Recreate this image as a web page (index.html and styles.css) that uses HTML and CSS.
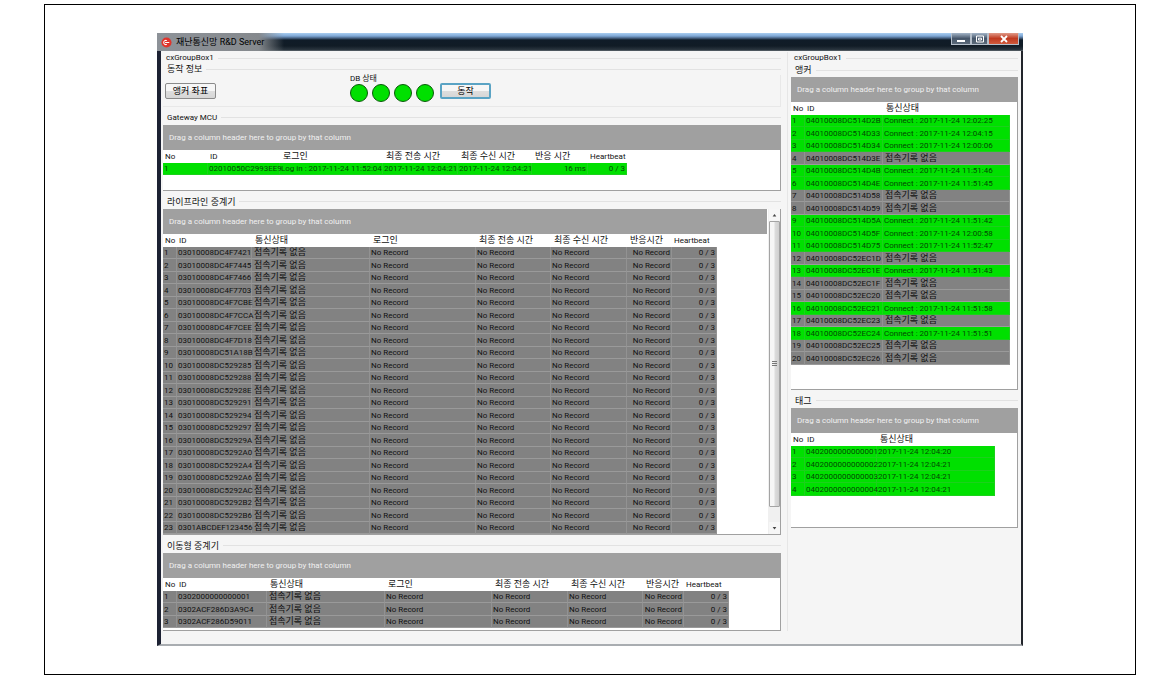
FILE: index.html
```html
<!DOCTYPE html>
<html lang="ko">
<head>
<meta charset="utf-8">
<title>재난통신망 R&amp;D Server</title>
<link rel="stylesheet" href="styles.css">
</head>
<body>
<div class="frame">
  <div class="window">
    <header class="titlebar">
      <div class="title">
        <svg class="logo" viewBox="0 0 12 12" aria-hidden="true"><circle cx="6" cy="6" r="5.5" fill="#e0342c"/><path d="M6.4 4A2.3 2.3 0 1 0 6.4 8M4.4 6H9" fill="none" stroke="#fff" stroke-width="1.1"/></svg>
        <h1>재난통신망 R&amp;D Server</h1>
      </div>
      <div class="controls">
        <button class="ctl ctl-min" aria-label="최소화"><svg viewBox="0 0 12 10"><path d="M2 6h8v2H2z" fill="#fff"/></svg></button>
        <button class="ctl ctl-max" aria-label="최대화"><svg viewBox="0 0 12 10"><path d="M2.5 2h7v6h-7zM4.5 4.2h3v1.8h-3z" fill="none" stroke="#fff"/></svg></button>
        <button class="ctl ctl-close" aria-label="닫기"><svg viewBox="0 0 12 10"><path d="M3 2l6 6M9 2L3 8" stroke="#fff" stroke-width="1.8"/></svg></button>
      </div>
    </header>
    <main class="content">
      <div class="column">
        <h2 class="caption caption-group">cxGroupBox1</h2>
        <h3 class="caption caption-inner ko">동작 정보</h3>
        <div class="toolbar">
          <button class="btn">앵커 좌표</button>
          <div class="db">
            <span class="db-label">DB 상태</span>
            <div class="lamps"><i class="lamp"></i><i class="lamp"></i><i class="lamp"></i><i class="lamp"></i></div>
          </div>
          <button class="btn btn-focus">동작</button>
        </div>

        <h3 class="caption">Gateway MCU</h3>
        <section class="grid grid-gateway">
          <p class="groupby">Drag a column header here to group by that column</p>
          <table>
            <colgroup><col class="w45"><col class="w72"><col class="w103"><col class="w75"><col class="w74"><col class="w56"><col class="w39"></colgroup>
            <thead><tr><th>No</th><th>ID</th><th class="ko">로그인</th><th class="ko">최종 전송 시간</th><th class="ko">최종 수신 시간</th><th class="ko">반응 시간</th><th>Heartbeat</th></tr></thead>
            <tbody id="gateway"></tbody>
          </table>
        </section>

        <h3 class="caption ko">라이프라인 중계기</h3>
        <section class="grid grid-scroll">
          <div class="grid-main">
            <p class="groupby">Drag a column header here to group by that column</p>
            <table>
              <colgroup><col class="w14"><col class="w75"><col class="w118"><col class="w106"><col class="w75"><col class="w76"><col class="w45"><col class="w45"></colgroup>
              <thead><tr><th>No</th><th>ID</th><th class="ko">통신상태</th><th class="ko">로그인</th><th class="ko">최종 전송 시간</th><th class="ko">최종 수신 시간</th><th class="ko">반응시간</th><th>Heartbeat</th></tr></thead>
              <tbody id="lifeline"></tbody>
            </table>
          </div>
          <div class="scrollbar" aria-hidden="true">
            <svg class="arrow" viewBox="0 0 12 12"><path d="M4 7.5L6 5l2 2.5z" fill="#444"/></svg>
            <div class="thumb"><svg viewBox="0 0 6 6"><path d="M0 .5h5M0 2.5h5M0 4.5h5" stroke="#777"/></svg></div>
            <svg class="arrow arrow-down" viewBox="0 0 12 12"><path d="M4 5l2 2.5L8 5z" fill="#444"/></svg>
          </div>
        </section>

        <h3 class="caption ko">이동형 중계기</h3>
        <section class="grid grid-mobile">
          <p class="groupby">Drag a column header here to group by that column</p>
          <table>
            <colgroup><col class="w14"><col class="w90"><col class="w118"><col class="w107"><col class="w76"><col class="w75"><col class="w41"><col class="w45"></colgroup>
            <thead><tr><th>No</th><th>ID</th><th class="ko">통신상태</th><th class="ko">로그인</th><th class="ko">최종 전송 시간</th><th class="ko">최종 수신 시간</th><th class="ko">반응시간</th><th>Heartbeat</th></tr></thead>
            <tbody id="mobile"></tbody>
          </table>
        </section>
      </div>

      <div class="column column-right">
        <h2 class="caption caption-group">cxGroupBox1</h2>
        <h3 class="caption caption-anchor ko">앵커</h3>
        <section class="grid grid-anchor">
          <p class="groupby">Drag a column header here to group by that column</p>
          <table>
            <colgroup><col class="w14"><col class="w78"><col class="w127"></colgroup>
            <thead><tr><th>No</th><th>ID</th><th class="ko">통신상태</th></tr></thead>
            <tbody id="anchor"></tbody>
          </table>
        </section>

        <h3 class="caption ko">태그</h3>
        <section class="grid grid-tag">
          <p class="groupby">Drag a column header here to group by that column</p>
          <table>
            <colgroup><col class="w14"><col class="w72"><col class="w118"></colgroup>
            <thead><tr><th>No</th><th>ID</th><th class="ko">통신상태</th></tr></thead>
            <tbody id="tag"></tbody>
          </table>
        </section>
      </div>
    </main>
  </div>
</div>
<script src="grids.js"></script>
</body>
</html>
```

FILE: styles.css
```css
* { box-sizing: border-box; }

body {
  margin: 0;
  background: #fff;
  color: #111;
  font: 8px/12px Roboto, "Noto Sans CJK KR", sans-serif;
}

h1, h2, h3, p { margin: 0; font-weight: 400; }

button { font-family: inherit; padding: 0; }

.frame {
  margin: 4px 20px 6px 44px;
  padding: 28px 112px;
  border: 1px solid #000;
}

.window {
  background: #f5f5f5;
  border-left: 4px solid #1d2233;
  border-right: 2px solid #22252b;
  border-bottom: 2px solid #a9adb1;
}

.titlebar {
  display: flex;
  justify-content: space-between;
  align-items: flex-start;
  height: 18px;
  margin-left: -4px;
  margin-right: -2px;
  background: linear-gradient(#a9cdf0 0, #7fa8d6 3px, #4a6688 5px, #101c28 7px, #111c26 13px, #2c3740 17px, #6d757a 18px);
}

.title {
  display: flex;
  align-items: center;
  gap: 4px;
  height: 18px;
  padding: 0 20px 0 4px;
  background: linear-gradient(90deg, #8d9298 0, #85898d 80%, transparent);
}

.title h1 { font-size: 9px; line-height: 18px; color: #000; }

.logo { width: 11px; height: 11px; }

.controls { display: flex; padding-right: 4px; }

.ctl {
  display: flex;
  align-items: center;
  justify-content: center;
  width: 20px;
  height: 12px;
  border: 1px solid #b5bfca;
  border-top: 0;
  background: linear-gradient(#a4b5c8, #46566a 50%, #5c6a79);
}
.ctl svg { width: 12px; height: 10px; }
.ctl-max { width: 17px; }
.ctl-close { width: 31px; background: linear-gradient(#e09a88, #c03a20 50%, #d05a3c); }

.content {
  display: grid;
  grid-template-columns: 627fr 233fr;
  padding: 1px 0 13px;
}

.column { min-width: 0; padding: 0 6px 0 2px; border-right: 1px solid #e6e6e6; }
.column-right { padding: 0 3px; border-right: 0; }

.caption {
  display: flex;
  align-items: center;
  gap: 4px;
  height: 18px;
  padding: 3px 0 0 4px;
  font-size: 8px;
  line-height: 14px;
}
.caption::after { content: ""; flex: 1; border-top: 1px solid #e2e2e2; }
.caption.ko { font-size: 9px; }
.caption-group { height: 12px; padding: 0 0 0 3px; line-height: 12px; }
.caption-inner { height: 11px; padding-top: 0; line-height: 11px; }
.caption-anchor { height: 13px; padding-top: 0; line-height: 13px; }

.toolbar {
  display: flex;
  align-items: flex-end;
  height: 32px;
  padding: 0 0 4px 2px;
  border-right: 1px solid #e8e8e8;
  border-bottom: 1px solid #e8e8e8;
}

.btn {
  width: 51px;
  height: 16px;
  margin-bottom: 3px;
  border: 1px solid #8a8a8a;
  border-radius: 2px;
  background: linear-gradient(#f6f6f6 50%, #dedede 50%, #d6d6d6);
  color: #000;
  font-size: 9px;
  line-height: 12px;
}
.btn-focus { border: 2px solid #5aa3c4; margin-left: 6px; }

.db { margin-left: 134px; }
.db-label { display: block; line-height: 9px; }
.lamps { display: flex; gap: 4px; padding-top: 1px; }
.lamp {
  width: 18px;
  height: 18px;
  border: 1px solid #0a5a0a;
  border-radius: 50%;
  background: #00e000;
}

.grid {
  background: #fff;
  border-right: 1px solid #a0a0a0;
  border-bottom: 1px solid #a0a0a0;
}
.grid-gateway { min-height: 66px; }
.grid-mobile { min-height: 78px; }
.grid-anchor { min-height: 313px; }
.grid-tag { min-height: 120px; }
.grid-scroll { display: flex; }
.grid-main { flex: 1; min-width: 0; }

.groupby {
  height: 25px;
  padding-left: 6px;
  background: #a0a0a0;
  color: #f0f0f0;
  line-height: 26px;
  white-space: nowrap;
  overflow: hidden;
}

table { width: 1px; table-layout: fixed; border-collapse: separate; border-spacing: 0; }
.w14 { width: 14px; }
.w39 { width: 39px; }
.w41 { width: 41px; }
.w45 { width: 45px; }
.w56 { width: 56px; }
.w72 { width: 72px; }
.w74 { width: 74px; }
.w75 { width: 75px; }
.w76 { width: 76px; }
.w78 { width: 78px; }
.w90 { width: 90px; }
.w103 { width: 103px; }
.w106 { width: 106px; }
.w107 { width: 107px; }
.w118 { width: 118px; }
.w127 { width: 127px; }

th {
  height: 13px;
  padding: 0 0 0 2px;
  font-weight: 400;
  line-height: 13px;
  text-align: left;
  white-space: nowrap;
}

td {
  height: 12px;
  padding: 0 0 0 1px;
  background: #828282;
  border-right: 1px solid #929292;
  border-bottom: 1px solid #9a9a9a;
  line-height: 11px;
  white-space: nowrap;
}
tr:nth-child(even) td { height: 13px; }
th.ko, td.ko { font-size: 9px; }
th.ko { padding-left: 3px; }
td.ko { padding-left: 2px; }
td.num { text-align: right; padding-right: 1px; }
.on td { background: #00e000; border-color: #1cd01c; color: #034a03; }

.scrollbar {
  display: flex;
  flex-direction: column;
  width: 13px;
  padding-left: 1px;
  background: #f0f0f0;
  border-left: 1px solid #fff;
}
.arrow { width: 11px; height: 12px; background: #f6f6f6; }
.arrow-down { margin-top: auto; }
.thumb {
  display: flex;
  align-items: center;
  justify-content: center;
  flex: 0 1 88%;
  border: 1px solid #a4a4a4;
  border-radius: 1px;
  background: linear-gradient(90deg, #f6f6f6 45%, #dcdcdc 55%, #cfcfcf);
}
.thumb svg { width: 6px; height: 6px; }
```

FILE: grids.js
```js
const NONE = "접속기록 없음";
const NO = "No Record";

function fill(id, rows, numericFrom) {
  const body = document.getElementById(id);
  rows.forEach(({ cells, on }, i) => {
    const tr = body.insertRow();
    if (on) tr.className = "on";
    [i + 1, ...cells].forEach((text, c) => {
      const td = tr.insertCell();
      td.textContent = text;
      if (text === NONE) td.className = "ko";
      if (c >= numericFrom) td.className = "num";
    });
  });
}

fill("gateway", [{
  on: true,
  cells: ["02010050C2993EE9", "Log in : 2017-11-24 11:52:04", "2017-11-24 12:04:21", "2017-11-24 12:04:21", "16 ms", "0 / 3"]
}], 5);

const repeater = id => ({ cells: [id, NONE, NO, NO, NO, NO, "0 / 3"] });

fill("lifeline", [
  "03010008DC4F7421", "03010008DC4F7445", "03010008DC4F7466", "03010008DC4F7703",
  "03010008DC4F7CBE", "03010008DC4F7CCA", "03010008DC4F7CEE", "03010008DC4F7D18",
  "03010008DC51A18B", "03010008DC529285", "03010008DC529288", "03010008DC52928E",
  "03010008DC529291", "03010008DC529294", "03010008DC529297", "03010008DC52929A",
  "03010008DC5292A0", "03010008DC5292A4", "03010008DC5292A6", "03010008DC5292AC",
  "03010008DC5292B2", "03010008DC5292B6", "0301ABCDEF123456"
].map(repeater), 6);

fill("mobile", ["0302000000000001", "0302ACF286D3A9C4", "0302ACF286D59011"].map(repeater), 6);

fill("anchor", [
  ["514D2B", "12:02:25"], ["514D33", "12:04:15"], ["514D34", "12:00:06"], ["514D3E"],
  ["514D4B", "11:51:46"], ["514D4E", "11:51:45"], ["514D58"], ["514D59"],
  ["514D5A", "11:51:42"], ["514D5F", "12:00:58"], ["514D75", "11:52:47"], ["52EC1D"],
  ["52EC1E", "11:51:43"], ["52EC1F"], ["52EC20"], ["52EC21", "11:51:58"],
  ["52EC23"], ["52EC24", "11:51:51"], ["52EC25"], ["52EC26"]
].map(([id, time]) => ({
  on: Boolean(time),
  cells: ["04010008DC" + id, time ? "Connect : 2017-11-24 " + time : NONE]
})), 9);

fill("tag", ["20", "21", "21", "21"].map((sec, i) => ({
  on: true,
  cells: ["040200000000000" + (i + 1), "2017-11-24 12:04:" + sec]
})), 9);
```
